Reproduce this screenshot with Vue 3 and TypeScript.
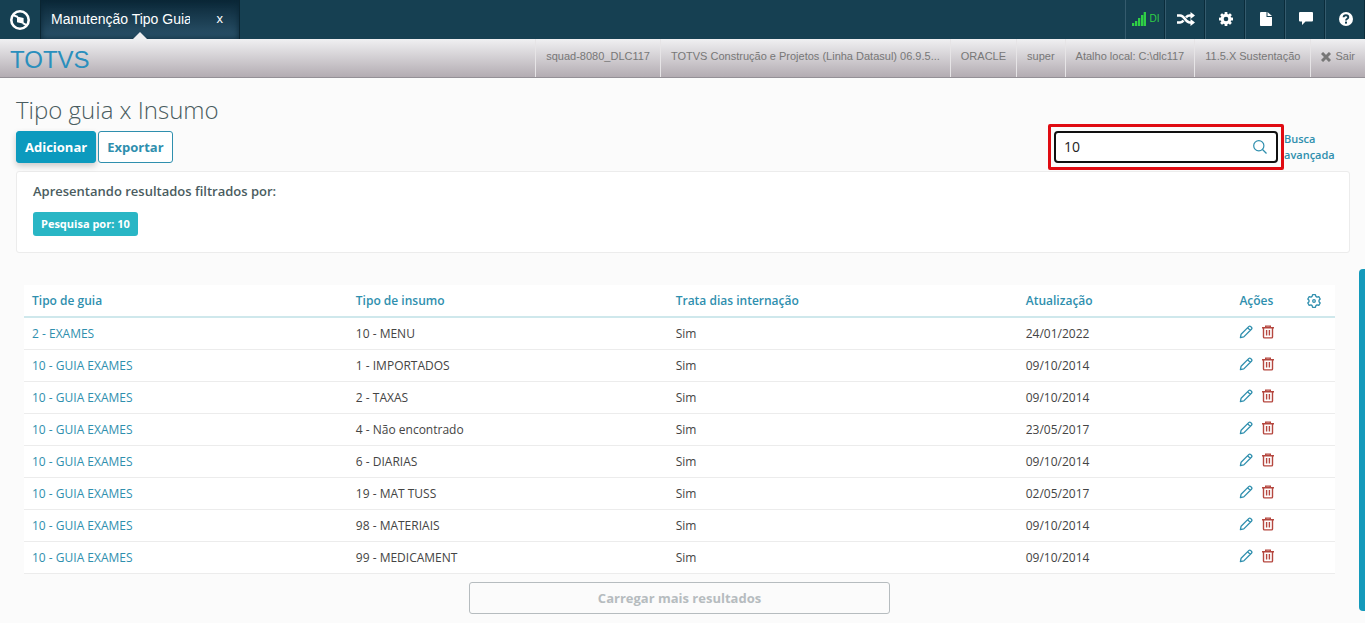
<script setup lang="ts">
import { ref } from 'vue'

interface Row {
  guia: string
  insumo: string
  dias: string
  data: string
}

const search = ref('10')

const status: string[] = [
  'squad-8080_DLC117',
  'TOTVS Construção e Projetos (Linha Datasul) 06.9.5...',
  'ORACLE',
  'super',
  'Atalho local: C:\\dlc117',
  '11.5.X Sustentação',
]

const exames = '10 - GUIA EXAMES'
const rows: Row[] = [
  { guia: '2 - EXAMES', insumo: '10 - MENU', dias: 'Sim', data: '24/01/2022' },
  { guia: exames, insumo: '1 - IMPORTADOS', dias: 'Sim', data: '09/10/2014' },
  { guia: exames, insumo: '2 - TAXAS', dias: 'Sim', data: '09/10/2014' },
  { guia: exames, insumo: '4 - Não encontrado', dias: 'Sim', data: '23/05/2017' },
  { guia: exames, insumo: '6 - DIARIAS', dias: 'Sim', data: '09/10/2014' },
  { guia: exames, insumo: '19 - MAT TUSS', dias: 'Sim', data: '02/05/2017' },
  { guia: exames, insumo: '98 - MATERIAIS', dias: 'Sim', data: '09/10/2014' },
  { guia: exames, insumo: '99 - MEDICAMENT', dias: 'Sim', data: '09/10/2014' },
]
</script>

<template>
  <div class="page">
    <header class="topbar">
      <button class="logo" type="button" aria-label="Início">
        <svg width="20" height="20" viewBox="0 0 20 20">
          <circle cx="10" cy="10" r="8.700" fill="none" stroke="#fff" stroke-width="2.600" />
          <path d="M7 6.400l6.600 1.600v5.800L7 12.200z" fill="#fff" />
          <path d="M2.500 4.800L7.800 7M12.800 13.200l4.200 2.200" fill="none" stroke="#fff" stroke-width="2" />
        </svg>
      </button>
      <div class="tab">
        <span class="tab-title">Manutenção Tipo Guia</span>
        <button class="tab-close" type="button" aria-label="Fechar aba">x</button>
      </div>
      <nav class="tools">
        <button class="tool signal" type="button">
          <svg width="14" height="14" viewBox="0 0 14 14" fill="#2fcf45">
            <path d="M0 11h2.300v3H0zM3 9h2.300v5H3zM6 6h2.300v8H6zM9 3h2.300v11H9zM11.700 0H14v14h-2.300z" />
          </svg>
          <span>DI</span>
        </button>
        <button class="tool" type="button" aria-label="Alternar">
          <svg width="18" height="14" viewBox="0 0 18 14">
            <path d="M0 3.500h3.200c4.600 0 5 7 9.600 7H14M0 10.500h3.200c1.500 0 2.500-.8 3.300-1.900M9 5.400c.9-1.100 2-1.900 3.800-1.900H14" fill="none" stroke="#fff" stroke-width="2.500" />
            <path d="M13.500 0L18 3.500 13.500 7zM13.500 7l4.500 3.500-4.500 3.500z" fill="#fff" />
          </svg>
        </button>
        <button class="tool" type="button" aria-label="Configurações">
          <svg width="14" height="14" viewBox="0 0 14 14">
            <g fill="#fff">
              <rect x="5.600" width="2.800" height="14" rx=".5" />
              <rect x="5.600" width="2.800" height="14" rx=".5" transform="rotate(45 7 7)" />
              <rect x="5.600" width="2.800" height="14" rx=".5" transform="rotate(90 7 7)" />
              <rect x="5.600" width="2.800" height="14" rx=".5" transform="rotate(135 7 7)" />
              <circle cx="7" cy="7" r="5.300" />
            </g>
            <circle cx="7" cy="7" r="2.300" fill="#164052" />
          </svg>
        </button>
        <button class="tool" type="button" aria-label="Documentos">
          <svg width="12" height="14" viewBox="0 0 12 14" fill="#fff">
            <path d="M1 0h5.500v5H12v8.200a.8.8 0 0 1-.8.8H.8a.8.8 0 0 1-.8-.8V1a1 1 0 0 1 1-1zM7.500 0L12 4H7.500z" />
          </svg>
        </button>
        <button class="tool" type="button" aria-label="Mensagens">
          <svg width="14" height="13" viewBox="0 0 14 13" fill="#fff">
            <path d="M1 0h12a1 1 0 0 1 1 1v7.500a1 1 0 0 1-1 1H6.500L3 13V9.500H1a1 1 0 0 1-1-1V1a1 1 0 0 1 1-1z" />
          </svg>
        </button>
        <button class="tool" type="button" aria-label="Ajuda">
          <svg width="14" height="14" viewBox="0 0 14 14">
            <circle cx="7" cy="7" r="7" fill="#fff" />
            <path d="M4.600 5.300C4.700 2.500 9.300 2.600 9.300 5.300 9.300 6.900 7 6.700 7 8.600" fill="none" stroke="#164052" stroke-width="1.900" />
            <rect x="6" y="9.600" width="2" height="2" fill="#164052" />
          </svg>
        </button>
      </nav>
    </header>

    <div class="subbar">
      <span class="brand">TOTVS</span>
      <ul class="status">
        <li v-for="item in status" :key="item">{{ item }}</li>
        <li>
          <a href="#" class="exit">
            <svg width="10" height="10" viewBox="0 0 10 10">
              <path d="M1 1l8 8M9 1L1 9" stroke="#777" stroke-width="3" />
            </svg>
            Sair
          </a>
        </li>
      </ul>
    </div>

    <div class="body">
      <main class="content">
        <h1>Tipo guia x Insumo</h1>
        <div class="actions">
          <div class="buttons">
            <button class="btn primary" type="button">Adicionar</button>
            <button class="btn" type="button">Exportar</button>
          </div>
          <div class="highlight">
            <div class="search">
              <input v-model="search" type="text" aria-label="Pesquisar" />
              <button type="button" aria-label="Buscar">
                <svg width="14" height="14" viewBox="0 0 14 14" fill="none" stroke="#2f8fae" stroke-width="1.200">
                  <circle cx="5.800" cy="5.800" r="5.100" />
                  <path d="M9.500 9.500l4 4" />
                </svg>
              </button>
            </div>
          </div>
          <a class="advanced" href="#">Busca avançada</a>
        </div>

        <section class="filters">
          <h2>Apresentando resultados filtrados por:</h2>
          <span class="tag">Pesquisa por: 10</span>
        </section>

        <section class="results">
          <table>
            <colgroup>
              <col class="c-guia" />
              <col class="c-insumo" />
              <col class="c-dias" />
              <col class="c-data" />
              <col class="c-acoes" />
              <col class="c-config" />
            </colgroup>
            <thead>
              <tr>
                <th>Tipo de guia</th>
                <th>Tipo de insumo</th>
                <th>Trata dias internação</th>
                <th>Atualização</th>
                <th>Ações</th>
                <th>
                  <button class="icon" type="button" aria-label="Gerenciar colunas">
                    <svg width="14" height="14" viewBox="0 0 14 14" fill="none" stroke="#2f8fae" stroke-width="1.300" stroke-linejoin="round">
                      <path d="M5.600.7h2.800l.5 1.700 1.100.7 1.800-.5 1.400 2.400L12 6.300v1.400l1.200 1.300-1.400 2.400-1.800-.5-1.100.7-.5 1.700H5.600l-.5-1.700-1.100-.7-1.800.5L.8 9 2 7.700V6.300L.8 5l1.400-2.400 1.800.5 1.100-.7z" />
                      <circle cx="7" cy="7" r="1.300" />
                    </svg>
                  </button>
                </th>
              </tr>
            </thead>
            <tbody>
              <tr v-for="row in rows" :key="row.insumo">
                <td><a href="#">{{ row.guia }}</a></td>
                <td>{{ row.insumo }}</td>
                <td>{{ row.dias }}</td>
                <td>{{ row.data }}</td>
                <td colspan="2">
                  <div class="row-actions">
                    <button class="icon" type="button" aria-label="Editar">
                      <svg width="14" height="14" viewBox="0 0 14 14" fill="none" stroke="#2f8fae" stroke-width="1.300" stroke-linejoin="round">
                        <path d="M1.400 12.600l.7-3.400 7.600-7.600a1.500 1.500 0 0 1 2.100 0l.6.6a1.500 1.500 0 0 1 0 2.100l-7.600 7.600zM8.600 2.700l2.700 2.700" />
                      </svg>
                    </button>
                    <button class="icon" type="button" aria-label="Excluir">
                      <svg width="14" height="14" viewBox="0 0 14 14" fill="none" stroke="#b5473f" stroke-width="1.400">
                        <path d="M1 2.700h12M4.700 2.700V1.100h4.600v1.600M2.500 2.700v9.200q0 1 1 1h7q1 0 1-1V2.700M5.600 5v5.600M8.400 5v5.600" />
                      </svg>
                    </button>
                  </div>
                </td>
              </tr>
            </tbody>
          </table>
          <button class="more" type="button" disabled>Carregar mais resultados</button>
        </section>
      </main>
      <div class="rail"><div class="thumb"></div></div>
    </div>
  </div>
</template>

<style>
body {
  margin: 0;
  background: #fbfbfb;
}
</style>

<style scoped>
* {
  box-sizing: border-box;
}
button,
input {
  font-family: inherit;
  margin: 0;
}
button {
  cursor: pointer;
}
a {
  color: #2f8fae;
  text-decoration: none;
}
.page {
  display: flex;
  flex-direction: column;
  min-height: 100vh;
  color: #4a5c60;
  font-family: "Open Sans", "Noto Sans", sans-serif;
}
.topbar {
  display: flex;
  height: 39px;
  background: #164052;
  font-family: "Liberation Sans", Arial, sans-serif;
}
.logo {
  display: grid;
  place-items: center;
  width: 40px;
  padding: 0;
  border: 0;
  background: none;
}
.tab {
  position: relative;
  display: flex;
  align-items: center;
  justify-content: space-between;
  width: 200px;
  padding: 0 16px 2px 10px;
  border: 1px solid #0a2532;
  border-width: 0 1px;
  background: linear-gradient(#0a2737, #2b536b);
  box-shadow: inset 0 0 6px #0a2737;
  color: #fff;
  font-size: 14px;
}
.tab::after {
  content: "";
  position: absolute;
  bottom: 0;
  left: 50%;
  margin-left: -7px;
  border: 7px solid transparent;
  border-width: 0 7px 7px;
  border-bottom-color: #f0f0f2;
}
.tab-title {
  width: 139px;
  overflow: hidden;
  white-space: nowrap;
}
.tab-close {
  padding: 0;
  border: 0;
  background: none;
  color: #fff;
  font-size: 13px;
}
.tools {
  display: flex;
  margin-left: auto;
}
.tool {
  display: flex;
  align-items: center;
  justify-content: center;
  gap: 4px;
  width: 40px;
  padding: 0 0 2px;
  border: 0;
  border-left: 1px solid #355b6d;
  box-shadow: inset -1px 0 #0a2c3b;
  background: none;
}
.signal {
  color: #2fcf45;
  font-size: 10px;
}
.subbar {
  display: flex;
  justify-content: space-between;
  height: 39px;
  border-bottom: 1px solid #949096;
  background: linear-gradient(#f0f0f2, #b3acb2);
  font-family: "Liberation Sans", Arial, sans-serif;
}
.brand {
  padding-left: 10px;
  color: #2a8fbd;
  font-size: 24px;
  line-height: 41px;
}
.status {
  display: flex;
  margin: 0;
  padding: 0;
  list-style: none;
  color: #777;
  font-size: 11px;
  line-height: 35px;
  white-space: nowrap;
}
.status li {
  padding: 0 10px;
  border-left: 1px solid #e6e4e6;
}
.exit {
  display: flex;
  align-items: center;
  gap: 4px;
  color: #777;
}
.body {
  display: flex;
  flex: 1;
}
.content {
  flex: 1;
  min-width: 0;
  padding: 16px 9px 9px 16px;
}
h1 {
  margin: 0;
  font-size: 24px;
  font-weight: 300;
  line-height: 32px;
}
.actions {
  display: flex;
  align-items: center;
  height: 45px;
  padding-bottom: 4px;
}
.buttons {
  display: flex;
  gap: 2px;
}
.btn {
  height: 32px;
  padding: 0 8px;
  border: 1px solid #2f8fae;
  border-radius: 3px;
  background: #fff;
  color: #2f8fae;
  font-size: 13px;
  font-weight: 700;
}
.primary {
  border-color: #0c9abe;
  background: #0c9abe;
  box-shadow: 0 3px 6px rgba(0, 0, 0, 0.2);
  color: #fff;
}
.highlight {
  margin-left: auto;
  padding: 4px 3px;
  border: 3px solid #e00b12;
  border-radius: 2px;
}
.search {
  display: flex;
  align-items: center;
  width: 224px;
  height: 32px;
  border: 2px solid #101010;
  border-radius: 4px;
  background: #fff;
}
.search input {
  flex: 1;
  min-width: 0;
  padding: 0 8px;
  border: 0;
  outline: 0;
  background: none;
  color: #222;
  font-size: 14px;
}
.search button {
  display: grid;
  padding: 0 9px;
  border: 0;
  background: none;
}
.advanced {
  width: 66px;
  font-size: 11px;
  font-weight: 600;
  line-height: 16px;
}
.filters {
  height: 82px;
  padding: 7px 16px;
  border: 1px solid #ececec;
  border-radius: 3px;
  background: #fff;
}
h2 {
  margin: 0 0 8px;
  font-size: 13px;
  font-weight: 600;
  line-height: 24px;
}
.tag {
  display: inline-block;
  padding: 0 8px;
  border-radius: 3px;
  background: #29b6c5;
  color: #fff;
  font-size: 11px;
  font-weight: 700;
  line-height: 24px;
}
.results {
  margin: 32px 15px 0 8px;
}
table {
  width: 100%;
  border-collapse: collapse;
  table-layout: fixed;
  background: #fff;
  color: #444;
  font-size: 12px;
}
.c-guia {
  width: 24.7%;
}
.c-insumo {
  width: 24.4%;
}
.c-dias {
  width: 26.7%;
}
.c-data {
  width: 16.3%;
}
.c-config {
  width: 36px;
}
th,
td {
  height: 32px;
  padding: 0 8px;
  text-align: left;
  font-weight: 400;
}
th {
  border-bottom: 2px solid #cfe8ec;
  color: #2f8fae;
  font-weight: 600;
}
td {
  border-bottom: 1px solid #ececec;
}
.row-actions {
  display: flex;
  gap: 8px;
}
.icon {
  display: grid;
  padding: 0;
  border: 0;
  background: none;
}
.row-actions .icon {
  padding-bottom: 2px;
}
.more {
  display: block;
  width: 421px;
  height: 32px;
  margin: 8px auto 0;
  border: 1px solid #b6bcbf;
  border-radius: 3px;
  background: #fbfbfb;
  color: #b6bcbf;
  font-size: 13px;
  font-weight: 700;
}
.rail {
  display: flex;
  width: 6px;
  padding: 191px 0 12px;
}
.thumb {
  flex: 1;
  border-radius: 4px 0 0 4px;
  background: #149abb;
}
</style>
